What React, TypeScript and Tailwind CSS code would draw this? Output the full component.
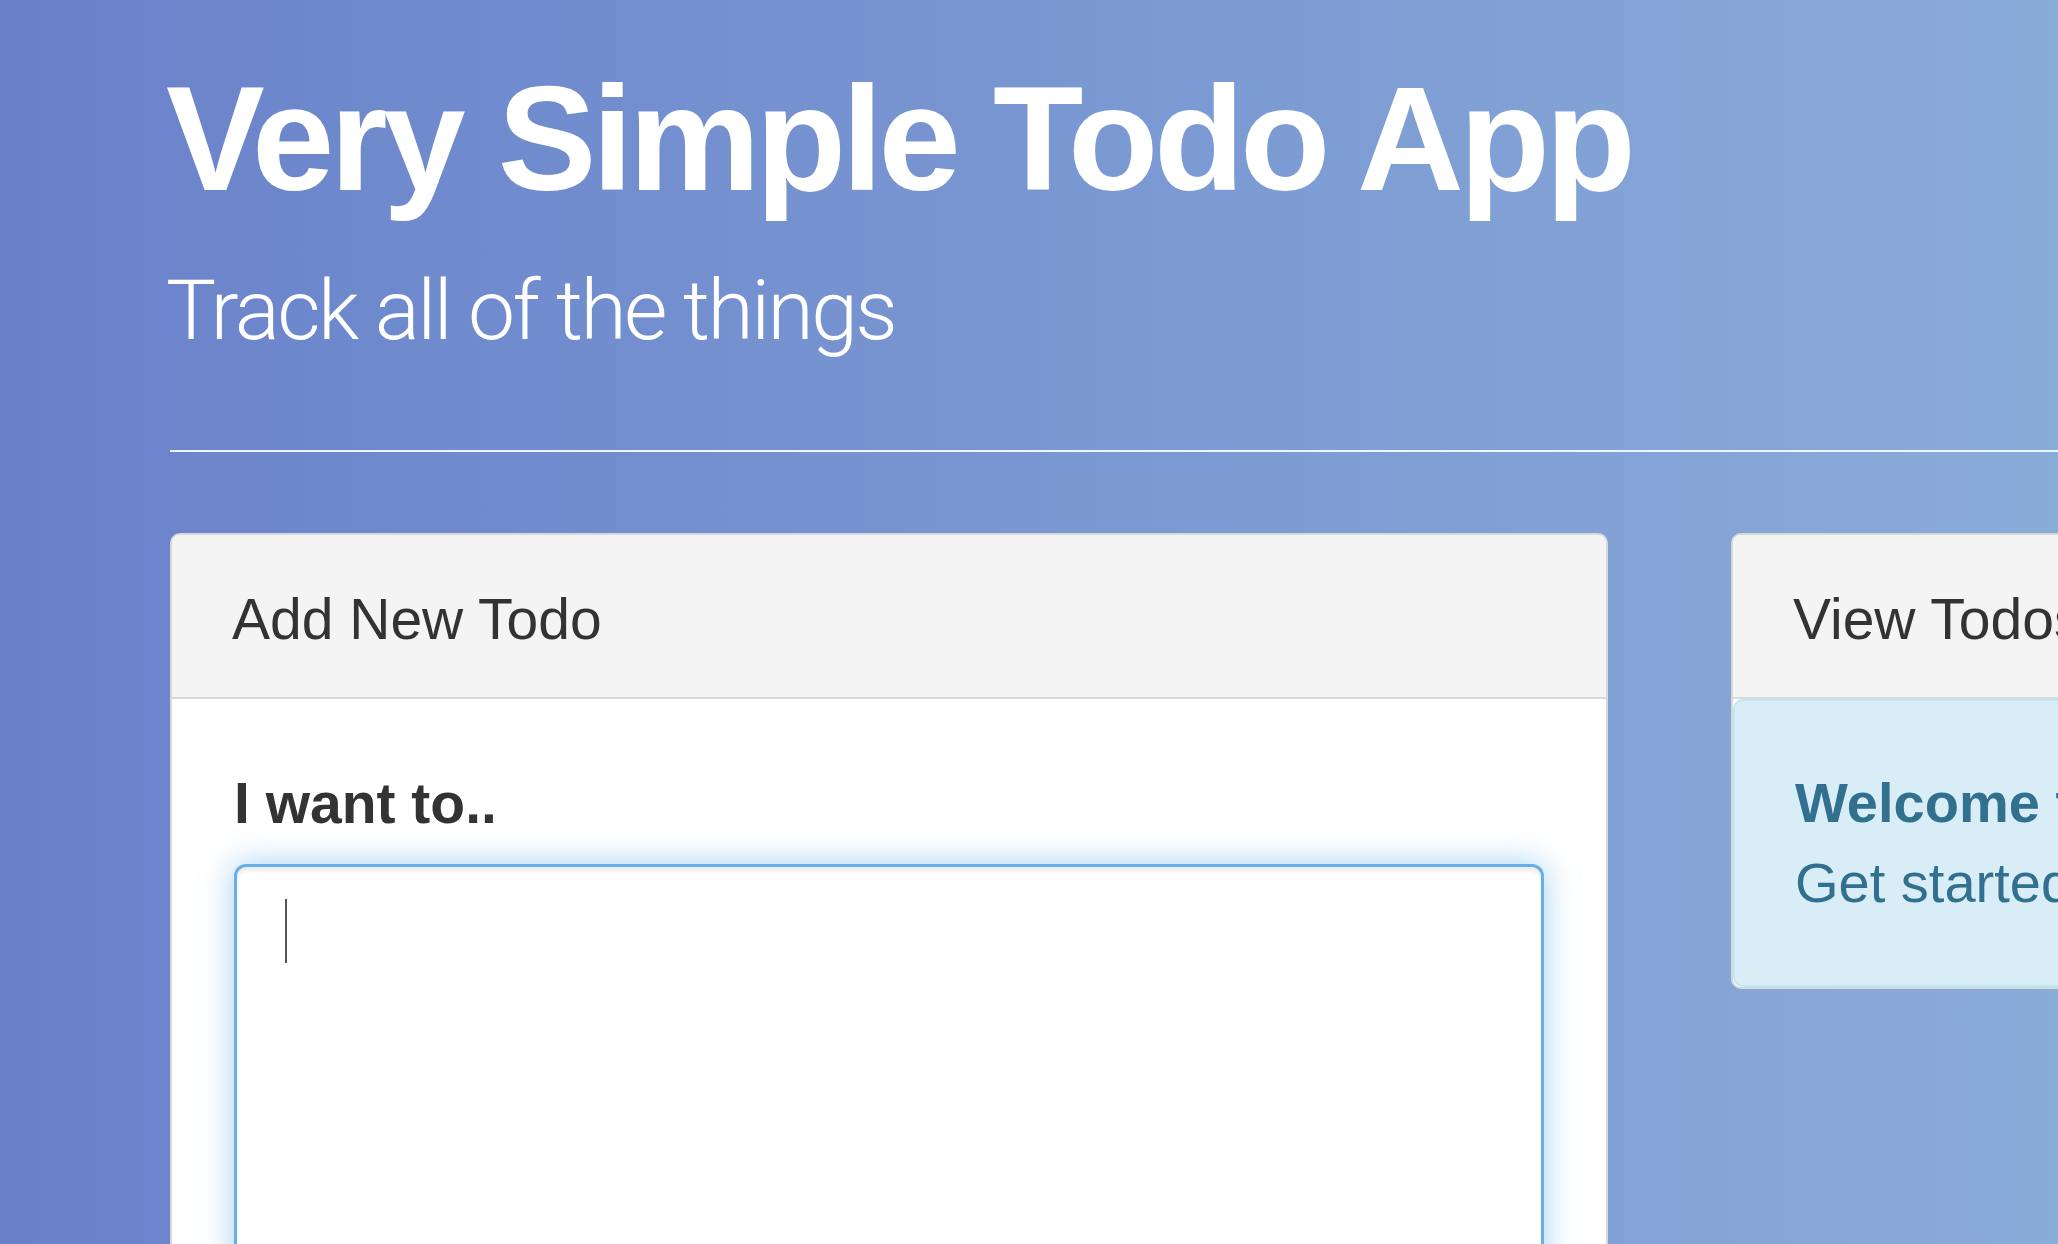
export default function App() {
  return (
    <div className="h-screen w-full overflow-hidden bg-linear-to-r from-[#6981ca] to-[#8aacd9] font-['Liberation_Sans',Arial,sans-serif]">
      {/* Jumbotron */}
      <div className="pl-[166px]">
        <h1 className="whitespace-nowrap pt-[65px] text-[148px] font-bold leading-none tracking-[-0.03em] text-white">
          Very Simple Todo App
        </h1>
        <p className="mt-[56px] whitespace-nowrap font-['Roboto',sans-serif] text-[84px] font-light leading-none tracking-[-2.5px] text-white">
          Track all of the things
        </p>
      </div>
      <div className="ml-[170px] mt-[97px] h-[2px] bg-[#f0f3fa]" />

      {/* Panels */}
      <div className="mt-[81px] flex gap-[123px] pl-[170px]">
        <div className="w-[1438px] shrink-0 overflow-hidden rounded-[10px] border-2 border-[#d8d8d8] bg-white">
          <div className="h-[164px] border-b-2 border-[#d8d8d8] bg-[#f4f4f4] px-[60px] pt-[56px]">
            <h3 className="text-[57px] leading-none text-[#333]">Add New Todo</h3>
          </div>
          <div className="px-[62px] pt-[76px] pb-[60px]">
            <label className="block text-[57px] font-bold leading-none text-[#333]">I want to..</label>
            <div className="mt-[32px] h-[600px] rounded-[12px] border-[3px] border-[#66afe9] bg-white px-[48px] py-[24px] shadow-[inset_0_4px_4px_rgba(0,0,0,0.075),0_0_32px_rgba(102,175,233,0.6)]">
              <div className="flex h-[80px] items-center">
                <span className="block h-[64px] w-[2px] bg-[#555]" />
              </div>
            </div>
          </div>
        </div>

        <div className="w-[1438px] shrink-0 self-start overflow-hidden rounded-[10px] border-2 border-[#d8d8d8] bg-white">
          <div className="h-[164px] border-b-2 border-[#d8d8d8] bg-[#f4f4f4] px-[60px] pt-[56px]">
            <h3 className="text-[57px] leading-none text-[#333]">View Todos</h3>
          </div>
          <div className="whitespace-nowrap rounded-[10px] border-2 border-[#bce8f1] bg-[#d9edf7] px-[60px] py-[62px] text-[56px] leading-[80px] text-[#31708f]">
            <strong className="font-bold">Welcome to your todo list!</strong>
            <br />
            Get started by adding a new todo on the left.
          </div>
        </div>
      </div>
    </div>
  )
}
